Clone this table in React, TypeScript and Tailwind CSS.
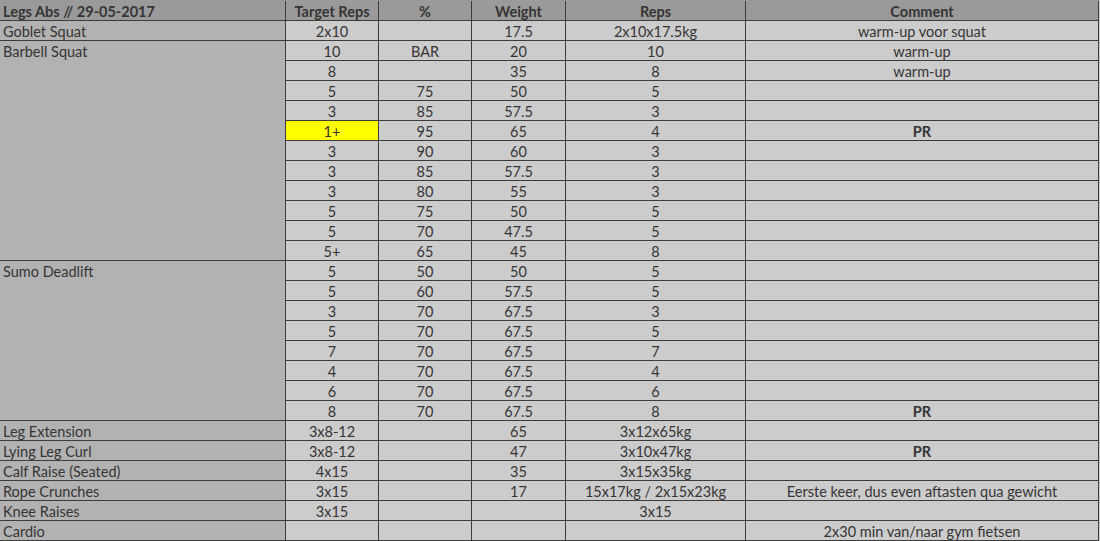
import React from "react";

type Row = { t: string; p: string; w: string; r: string; c: string; bold?: boolean; yellow?: boolean };

const groups: { name: string; rows: Row[] }[] = [
  { name: "Goblet Squat", rows: [{ t: "2x10", p: "", w: "17.5", r: "2x10x17.5kg", c: "warm-up voor squat" }] },
  {
    name: "Barbell Squat",
    rows: [
      { t: "10", p: "BAR", w: "20", r: "10", c: "warm-up" },
      { t: "8", p: "", w: "35", r: "8", c: "warm-up" },
      { t: "5", p: "75", w: "50", r: "5", c: "" },
      { t: "3", p: "85", w: "57.5", r: "3", c: "" },
      { t: "1+", p: "95", w: "65", r: "4", c: "PR", bold: true, yellow: true },
      { t: "3", p: "90", w: "60", r: "3", c: "" },
      { t: "3", p: "85", w: "57.5", r: "3", c: "" },
      { t: "3", p: "80", w: "55", r: "3", c: "" },
      { t: "5", p: "75", w: "50", r: "5", c: "" },
      { t: "5", p: "70", w: "47.5", r: "5", c: "" },
      { t: "5+", p: "65", w: "45", r: "8", c: "" },
    ],
  },
  {
    name: "Sumo Deadlift",
    rows: [
      { t: "5", p: "50", w: "50", r: "5", c: "" },
      { t: "5", p: "60", w: "57.5", r: "5", c: "" },
      { t: "3", p: "70", w: "67.5", r: "3", c: "" },
      { t: "5", p: "70", w: "67.5", r: "5", c: "" },
      { t: "7", p: "70", w: "67.5", r: "7", c: "" },
      { t: "4", p: "70", w: "67.5", r: "4", c: "" },
      { t: "6", p: "70", w: "67.5", r: "6", c: "" },
      { t: "8", p: "70", w: "67.5", r: "8", c: "PR", bold: true },
    ],
  },
  { name: "Leg Extension", rows: [{ t: "3x8-12", p: "", w: "65", r: "3x12x65kg", c: "" }] },
  { name: "Lying Leg Curl", rows: [{ t: "3x8-12", p: "", w: "47", r: "3x10x47kg", c: "PR", bold: true }] },
  { name: "Calf Raise (Seated)", rows: [{ t: "4x15", p: "", w: "35", r: "3x15x35kg", c: "" }] },
  { name: "Rope Crunches", rows: [{ t: "3x15", p: "", w: "17", r: "15x17kg / 2x15x23kg", c: "Eerste keer, dus even aftasten qua gewicht" }] },
  { name: "Knee Raises", rows: [{ t: "3x15", p: "", w: "", r: "3x15", c: "" }] },
  { name: "Cardio", rows: [{ t: "", p: "", w: "", r: "", c: "2x30 min van/naar gym fietsen" }] },
];

const cell = "border-r border-b border-[#3c3c3c] box-border overflow-hidden whitespace-nowrap leading-[19px] pt-px";
const dataCell = `${cell} bg-[#cccccc] text-center`;

const spanClass: Record<number, string> = {
  1: "row-span-1",
  8: "row-span-8",
  11: "row-span-11",
};

export default function App() {
  return (
    <div
      className="w-[1100px] h-[541px] bg-[#cccccc] text-[#363434] text-[14.5px] overflow-hidden"
      style={{ fontFamily: "Lato, 'Open Sans', sans-serif" }}
    >
      <div className="h-px bg-[#9a9a9a] w-[1099px]" />
      <div className="grid grid-cols-[286px_93px_93px_94px_180px_353px] auto-rows-[20px]">
        <div className={`${cell} bg-[#9a9a9a] font-bold pl-[3px]`}>Legs Abs // 29-05-2017</div>
        <div className={`${cell} bg-[#9a9a9a] font-bold text-center`}>Target Reps</div>
        <div className={`${cell} bg-[#9a9a9a] font-bold text-center`}>%</div>
        <div className={`${cell} bg-[#9a9a9a] font-bold text-center`}>Weight</div>
        <div className={`${cell} bg-[#9a9a9a] font-bold text-center`}>Reps</div>
        <div className={`${cell} bg-[#9a9a9a] font-bold text-center`}>Comment</div>
        {groups.map((g) => (
          <React.Fragment key={g.name}>
            <div className={`${cell} bg-[#b2b2b2] pl-[3px] ${spanClass[g.rows.length]}`}>{g.name}</div>
            {g.rows.map((r, i) => (
              <React.Fragment key={i}>
                <div className={`${dataCell} ${r.yellow ? "!bg-[#ffff00]" : ""}`}>{r.t}</div>
                <div className={dataCell}>{r.p}</div>
                <div className={dataCell}>{r.w}</div>
                <div className={dataCell}>{r.r}</div>
                <div className={`${dataCell} ${r.bold ? "font-bold" : ""}`}>{r.c}</div>
              </React.Fragment>
            ))}
          </React.Fragment>
        ))}
      </div>
    </div>
  );
}
